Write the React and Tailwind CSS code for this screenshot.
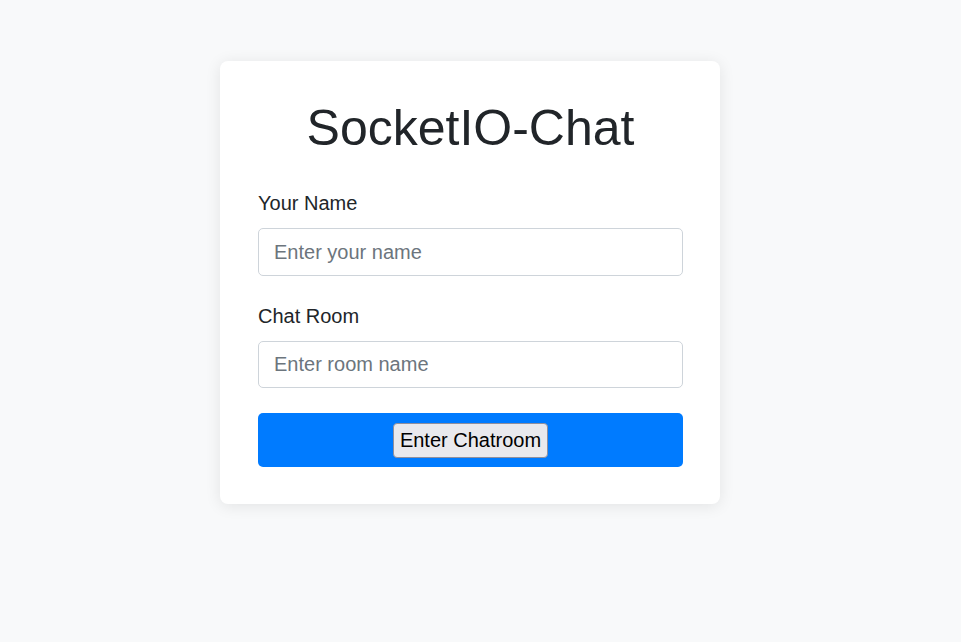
export default function App() {
  return (
    <div className="min-h-[642px] w-full bg-[#f8f9fa] flex pl-[220px] pt-[61px] text-[#212529]" style={{ fontFamily: '"Liberation Sans", Arial, sans-serif' }}>
      <div className="w-[500px] h-[443px] bg-white rounded-[8px] shadow-[0_2px_16px_rgba(0,0,0,0.09)] pl-[38px] pr-[37px] pt-[37px]">
        <h1 className="text-[50px] leading-[60px] text-center font-normal mb-[30px]">SocketIO-Chat</h1>
        <label className="block text-[20px] leading-[30px] mb-[10px]">Your Name</label>
        <input
          className="block w-full h-[48px] border border-[#ced4da] rounded-[5px] px-[15px] text-[20px] placeholder:text-[#6c757d] outline-none"
          placeholder="Enter your name"
        />
        <label className="block text-[20px] leading-[30px] mt-[25px] mb-[10px]">Chat Room</label>
        <input
          className="block w-full h-[47px] border border-[#ced4da] rounded-[5px] px-[15px] text-[20px] placeholder:text-[#6c757d] outline-none"
          placeholder="Enter room name"
        />
        <div className="mt-[25px] h-[54px] bg-[#007bff] rounded-[5px] flex items-center justify-center">
          <button className="h-[35px] px-[6px] bg-[#e9e9ed] border border-[#8f8f9d] rounded-[4px] text-[20px] text-black leading-none">
            Enter Chatroom
          </button>
        </div>
      </div>
    </div>
  );
}
